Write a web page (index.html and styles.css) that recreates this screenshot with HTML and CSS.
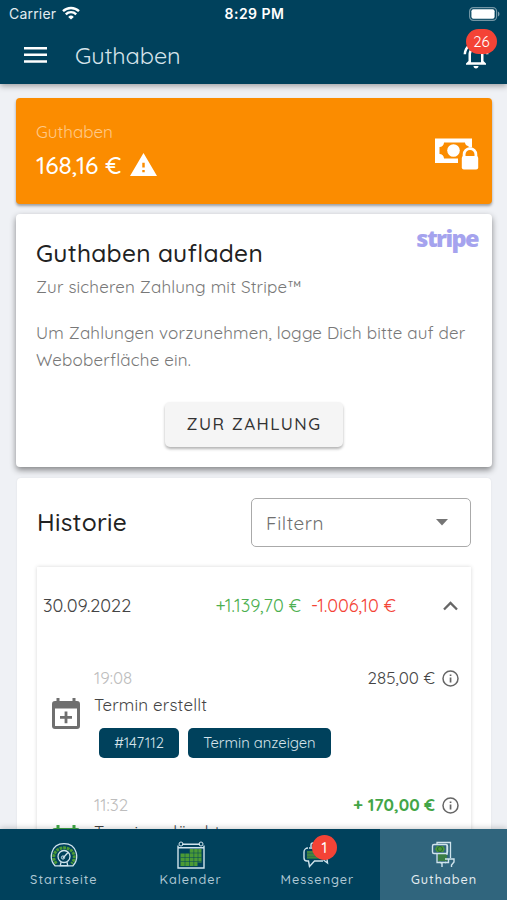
FILE: index.html
```html
<!DOCTYPE html>
<html lang="de">
<head>
    <meta charset="UTF-8">
    <meta name="viewport" content="width=device-width, initial-scale=1.0">
    <title>Guthaben</title>
    <link rel="stylesheet" href="styles.css">
</head>
<body>
    <header class="app-bar">
        <div class="status-bar">
            <div class="carrier">
                <span>Carrier</span>
                <svg width="18" height="14" viewBox="0 0 18 14" fill="none" stroke="#fff" stroke-width="2.4">
                    <path d="M1 5.2a11.5 11.5 0 0 1 16 0M3.8 8.3a7.4 7.4 0 0 1 10.4 0" />
                    <path d="M9 13.6L6.2 10.9a4 4 0 0 1 5.6 0z" fill="#fff" stroke="none" />
                </svg>
            </div>
            <span class="time">8:29 PM</span>
            <svg class="battery" width="31" height="14" viewBox="0 0 31 14">
                <rect x="0.6" y="0.6" width="27" height="12.8" rx="3.8" fill="none" stroke="#fff" stroke-opacity="0.45" stroke-width="1.2" />
                <rect x="2.4" y="2.3" width="23.2" height="9.4" rx="2" fill="#fff" />
                <path d="M29 4.6c2 1 2 4 0 5z" fill="#fff" fill-opacity="0.5" />
            </svg>
        </div>
        <div class="toolbar">
            <svg class="menu" width="23" height="16" viewBox="0 0 23 16" fill="#fff">
                <path d="M0 0h23v2.5H0zM0 6.6h23v2.5H0zM0 13.2h23v2.5H0z" />
            </svg>
            <h1 class="title">Guthaben</h1>
            <div class="bell">
                <svg width="30" height="30" viewBox="0 0 24 24" fill="#fff">
                    <path d="M12 22c1.1 0 2-.9 2-2h-4c0 1.100.9 2 2 2zm6-6v-5c0-3.070-1.630-5.640-4.500-6.320V4c0-.83-.67-1.500-1.500-1.500s-1.500.67-1.500 1.500v.68C7.640 5.360 6 7.920 6 11v5l-2 2v1h16v-1l-2-2zm-2 1H8v-6c0-2.480 1.510-4.500 4-4.500s4 2.020 4 4.500v6zM7.580 4.080L6.150 2.650C3.750 4.480 2.170 7.300 2.030 10.500h2c.15-2.650 1.510-4.970 3.550-6.420zm12.390 6.420h2c-.15-3.200-1.730-6.020-4.120-7.850l-1.420 1.430c2.020 1.450 3.390 3.770 3.540 6.420z" />
                </svg>
                <span class="badge">26</span>
            </div>
        </div>
    </header>

    <main>
        <section class="card balance">
            <div>
                <div class="balance-label">Guthaben</div>
                <div class="balance-value">
                    <span>168,16 €</span>
                    <svg width="27" height="23" viewBox="1 2 22 19" preserveAspectRatio="none" fill="#fff">
                        <path d="M1 21h22L12 2 1 21zm12-3h-2v-2h2v2zm0-4h-2v-4h2v4z" />
                    </svg>
                </div>
            </div>
            <svg class="money" width="44" height="34" viewBox="0 0 44 34">
                <path d="M0 0.500h37v9h-3.500V8a4 4 0 0 1-3.500-3.500H9A4.500 4.500 0 0 1 4.500 9v7A4.500 4.500 0 0 1 9 20.500h14V25H0z" fill="#fff" />
                <circle cx="18.500" cy="12.500" r="6.300" fill="#fff" />
                <path d="M28.500 18v-2.500a5.800 5.800 0 0 1 11.800 0V18" fill="none" stroke="#fff" stroke-width="2.800" transform="translate(.6 1)" />
                <rect x="26.800" y="18" width="16.400" height="13.500" rx="2" fill="#fff" />
            </svg>
        </section>

        <section class="card payment">
            <div class="stripe">stripe</div>
            <h2>Guthaben aufladen</h2>
            <p class="subtitle">Zur sicheren Zahlung mit Stripe™</p>
            <p class="text">Um Zahlungen vorzunehmen, logge Dich bitte auf der Weboberfläche ein.</p>
            <button class="button">ZUR ZAHLUNG</button>
        </section>

        <section class="card history">
            <div class="history-head">
                <h2>Historie</h2>
                <div class="select">
                    <span>Filtern</span>
                    <svg width="12" height="7" viewBox="0 0 12 7" fill="#757575"><path d="M0 0h12L6 6.500z" /></svg>
                </div>
            </div>
            <div class="panel">
                <div class="day">
                    <span class="date">30.09.2022</span>
                    <span class="sum plus">+1.139,70 €</span>
                    <span class="sum minus">-1.006,10 €</span>
                    <svg width="15" height="10" viewBox="0 0 15 10" fill="none" stroke="#666" stroke-width="2.300"><path d="M1 8.500l6.500-6.500L14 8.500" /></svg>
                </div>
                <div class="entry">
                    <svg class="entry-icon" width="28" height="31" viewBox="0 0 28 31" fill="#6f6f6f">
                        <path fill-rule="evenodd" d="M4.500 0h3v3h13V0h3v3H25a3 3 0 0 1 3 3v22a3 3 0 0 1-3 3H3a3 3 0 0 1-3-3V6a3 3 0 0 1 3-3h1.500zM3 10.500V28h22V10.500z" />
                        <path d="M12.600 13.500h2.800v4.400H20v2.800h-4.600v4.600h-2.800v-4.600H8v-2.800h4.600z" />
                    </svg>
                    <div class="entry-body">
                        <div class="time-label">19:08</div>
                        <div class="entry-title">Termin erstellt</div>
                        <div class="chips">
                            <span class="chip number">#147112</span>
                            <span class="chip show">Termin anzeigen</span>
                        </div>
                    </div>
                    <div class="amount">
                        <span>285,00 €</span>
                        <svg width="17" height="17" viewBox="0 0 17 17"><circle cx="8.500" cy="8.500" r="7.500" fill="none" stroke="#666" stroke-width="1.500" /><path d="M7.700 4.400h1.700v1.700H7.700zM7.700 7.400h1.700v5.200H7.700z" fill="#666" /></svg>
                    </div>
                </div>
                <div class="entry">
                    <svg class="entry-icon" width="28" height="31" viewBox="0 0 28 31" fill="#3fa845">
                        <path fill-rule="evenodd" d="M4.500 0h3v3h13V0h3v3H25a3 3 0 0 1 3 3v22a3 3 0 0 1-3 3H3a3 3 0 0 1-3-3V6a3 3 0 0 1 3-3h1.500zM3 10.500V28h22V10.500z" />
                    </svg>
                    <div class="entry-body">
                        <div class="time-label">11:32</div>
                        <div class="entry-title">Termin gelöscht</div>
                    </div>
                    <div class="amount income">
                        <span>+ 170,00 €</span>
                        <svg width="17" height="17" viewBox="0 0 17 17"><circle cx="8.500" cy="8.500" r="7.500" fill="none" stroke="#666" stroke-width="1.500" /><path d="M7.700 4.400h1.700v1.700H7.700zM7.700 7.400h1.700v5.200H7.700z" fill="#666" /></svg>
                    </div>
                </div>
            </div>
        </section>
    </main>

    <nav class="bottom-nav">
        <a class="nav-item start">
            <svg width="28" height="28" viewBox="0 0 28 28" fill="none">
                <path d="M6.500 22.500A10.300 9.300 0 1 1 21.500 22.500" stroke="#4b9a35" stroke-width="3" stroke-dasharray="2.800 .8" />
                <path d="M5 24.800C-1.500 18 .5 2.600 14 2.600S29.500 18 23 24.800z" stroke="#cfe3ec" stroke-width="1.300" />
                <circle cx="14" cy="15.500" r="6" stroke="#cfe3ec" stroke-width="1.300" />
                <path d="M13 17L18 11.500M11 21.200l-.7 3.500h7.400l-.7-3.500" stroke="#cfe3ec" stroke-width="1.300" />
                <circle cx="13" cy="16.500" r="1.600" stroke="#cfe3ec" />
            </svg>
            <span>Startseite</span>
        </a>
        <a class="nav-item calendar">
            <svg width="28" height="28" viewBox="0 0 28 28" fill="none">
                <path d="M12.500 8h12v13.500h-4V25H3.500V12.500h9z" fill="#4b9a35" />
                <path d="M3.500 16.500h21M3.500 20.500h21M8 12v13M12.500 8v17M16.800 8v17M21 8v14M12 12h13" stroke="#00415c" stroke-width=".5" />
                <path d="M1 4.500V27h26V4.500M1 6.800h26M5 3.200h18" stroke="#cfe3ec" stroke-width="1.400" />
                <circle cx="4" cy="3" r="2" stroke="#cfe3ec" /><circle cx="24" cy="3" r="2" stroke="#cfe3ec" />
            </svg>
            <span>Kalender</span>
        </a>
        <a class="nav-item messenger">
            <svg width="28" height="28" viewBox="0 0 28 28" fill="none">
                <path d="M8 6V4a2 2 0 0 1 2-2h12a2 2 0 0 1 2 2v14l.5 4-4-3" stroke="#cfe3ec" stroke-width="1.400" />
                <path d="M4 10h14v7H4z" fill="#386f4d" /><path d="M4 11h14M4 14h14M4 17h14" stroke="#4b9a35" />
                <path d="M6 7h11M5 7a4 4 0 0 0-4 4v6a3 3 0 0 0 3 3h1.500l1 5.500 5-5.500H20" stroke="#cfe3ec" stroke-width="1.400" />
            </svg>
            <span class="badge">1</span>
            <span>Messenger</span>
        </a>
        <a class="nav-item credit active">
            <svg width="28" height="28" viewBox="0 0 28 28" fill="none">
                <path d="M8 13v7h9v-7z" fill="#3b7d45" />
                <path d="M7 12v9.500h9M7 3V1.500h13.500V17M17 4v10" stroke="#cfe3ec" stroke-width="1.300" />
                <rect x="2.500" y="3.500" width="15" height="9" rx="1.500" stroke="#cfe3ec" stroke-width="1.400" />
                <path d="M5 8l2-3h6l2 3-2 3H7z" fill="#4b9a35" />
                <circle cx="10" cy="8" r="2.500" fill="#4b9a35" stroke="#28643a" />
                <path d="M12 26v-3.500L9.500 21M15 21.500h3.500V18H15M18.500 18H24v3L21.500 24v2" stroke="#cfe3ec" stroke-width="1.400" />
            </svg>
            <span>Guthaben</span>
        </a>
    </nav>
</body>
</html>
```
FILE: styles.css
```css
* {
    margin: 0;
    padding: 0;
    box-sizing: border-box;
}

body {
    background-color: #eff1f5;
    color: #444444;
    font-family: Quicksand, Lato, sans-serif;
    font-size: 17px;
    height: 900px;
    display: flex;
    flex-direction: column;
    overflow: hidden;
}

svg {
    display: block;
    flex: none;
}

h1, h2 {
    font-weight: 400;
}

.app-bar {
    background-color: #00415c;
    color: #ffffff;
    height: 84px;
    flex: none;
    box-shadow: 0 2px 6px rgba(0, 0, 0, 0.35);
    z-index: 1;
}

.status-bar {
    display: grid;
    grid-template-columns: 1fr auto 1fr;
    align-items: center;
    height: 27px;
    padding: 0 7px 0 9px;
    font-family: Inter, sans-serif;
    font-size: 14px;
}

.carrier {
    display: flex;
    align-items: center;
    gap: 6px;
    letter-spacing: 0.2px;
    color: #e3ecf0;
}

.carrier svg {
    margin-top: -2px;
}

.time {
    font-weight: 600;
    letter-spacing: 0.5px;
}

.battery {
    justify-self: end;
}

.toolbar {
    display: flex;
    align-items: center;
    height: 56px;
    padding: 0 16px 0 24px;
}

.title {
    flex: 1;
    margin-left: 28px;
    font-size: 23.5px;
    letter-spacing: -0.1px;
    color: #d5e3ea;
}

.bell {
    position: relative;
    margin-top: 1px;
}

.badge {
    position: absolute;
    background-color: #f44336;
    color: #ffffff;
    border-radius: 13px;
    height: 25px;
    line-height: 25px;
    text-align: center;
    font-size: 15px;
}

.bell .badge {
    width: 31px;
    right: -6px;
    top: -12px;
}

main {
    flex: 1;
    min-height: 0;
    overflow: hidden;
    padding: 14px 15px 0 16px;
    display: flex;
    flex-direction: column;
}

.card {
    flex: none;
    border-radius: 4px;
    background-color: #ffffff;
}

.balance {
    height: 106px;
    margin-bottom: 10px;
    padding: 3px 13px 0 20px;
    display: flex;
    align-items: center;
    justify-content: space-between;
    background-color: #fb8c00;
    color: #ffffff;
    box-shadow: 0 2px 3px rgba(0, 0, 0, 0.35);
}

.balance-label {
    color: #ffc988;
    line-height: 24px;
}

.balance-value {
    display: flex;
    align-items: center;
    gap: 9px;
    font-size: 24.5px;
    font-weight: 500;
    line-height: 41px;
}

.money {
    margin-top: 5px;
}

.payment {
    height: 253px;
    margin-bottom: 11px;
    padding: 21px 20px 0;
    position: relative;
    box-shadow: 0 3px 6px rgba(0, 0, 0, 0.45);
}

.stripe {
    position: absolute;
    right: 14px;
    top: 8px;
    font-family: "Open Sans", sans-serif;
    font-weight: 800;
    font-size: 23.5px;
    line-height: 33px;
    letter-spacing: -1.6px;
    color: #a5a3ee;
}

h2 {
    font-size: 24.5px;
    line-height: 36px;
    color: #222222;
    letter-spacing: 0.3px;
    font-weight: 500;
}

.subtitle, .text {
    color: #787878;
    line-height: 27px;
    letter-spacing: 0.17px;
}

.subtitle {
    margin-top: 2px;
}

.text {
    margin-top: 19px;
}

.button {
    display: block;
    width: 178px;
    height: 45px;
    margin: 29px auto 0;
    padding-bottom: 2px;
    border: none;
    border-radius: 5px;
    background-color: #f5f5f5;
    box-shadow: 0 2px 3px rgba(0, 0, 0, 0.3);
    color: #333333;
    font-family: inherit;
    font-size: 17px;
    font-weight: 500;
    letter-spacing: 1.5px;
}

.history {
    margin: 0 1px;
    padding: 20px 20px 0;
    box-shadow: 0 0 2px rgba(0, 0, 0, 0.08);
}

.history-head {
    display: flex;
    justify-content: space-between;
    align-items: center;
    height: 49px;
}

.history-head h2 {
    margin-top: -2px;
}

.select {
    width: 220px;
    height: 49px;
    padding: 0 22px 0 14px;
    border: 1px solid #aaaaaa;
    border-radius: 5px;
    display: flex;
    align-items: center;
    justify-content: space-between;
    color: #707070;
    font-size: 19px;
    letter-spacing: 0.5px;
}

.panel {
    margin-top: 20px;
    height: 330px;
    box-shadow: 0 0 4px rgba(0, 0, 0, 0.16);
}

.day {
    height: 77px;
    display: flex;
    align-items: center;
    padding: 0 13px 0 6px;
    font-size: 18.2px;
}

.plus {
    margin-left: auto;
    color: #4caf50;
}

.minus {
    margin: 0 47px 0 10px;
    color: #f44336;
}

.entry {
    height: 127px;
    display: flex;
    align-items: flex-start;
    padding: 20px 12px 0 15px;
}

.entry-icon {
    margin-top: 34px;
}

.entry-body {
    flex: 1;
    padding-left: 14px;
    line-height: 27px;
}

.time-label {
    color: #bdbdbd;
}

.entry-title {
    letter-spacing: 0.15px;
}

.chips {
    display: flex;
    gap: 9px;
    padding: 10px 0 0 5px;
}

.chip {
    height: 30px;
    line-height: 29px;
    border-radius: 5px;
    background-color: #00415c;
    color: #d5e3ea;
    text-align: center;
    font-size: 14.8px;
}

.number {
    width: 80px;
}

.show {
    width: 143px;
}

.amount {
    display: flex;
    align-items: center;
    gap: 7px;
    line-height: 27px;
}

.amount svg {
    margin-top: 2px;
}

.income span {
    color: #43a547;
    font-weight: 700;
}

.bottom-nav {
    display: grid;
    grid-template-columns: repeat(4, 1fr);
    height: 71px;
    flex: none;
    background-color: #00415c;
    box-shadow: 0 -1px 6px rgba(0, 0, 0, 0.2);
    z-index: 1;
}

.nav-item {
    position: relative;
    display: flex;
    flex-direction: column;
    align-items: center;
    padding: 12px 0 0 1px;
    gap: 2px;
    color: #afc8d4;
    font-size: 12.7px;
    font-weight: 500;
    line-height: 17px;
    letter-spacing: 1px;
}

.nav-item .badge {
    width: 25px;
    left: 46%;
    top: 6px;
    letter-spacing: 0;
}

.active {
    background-color: #30657d;
    color: #e4edf1;
}
```
